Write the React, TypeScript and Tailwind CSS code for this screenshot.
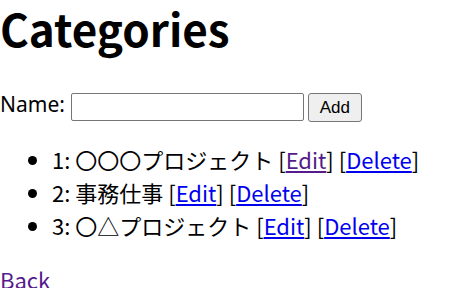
export default function App() {
  const jp = { fontFamily: '"Noto Sans CJK JP", "Noto Sans", sans-serif' };
  return (
    <div className="bg-white text-black text-[22px] leading-normal w-[454px] h-[288px] overflow-hidden" style={jp}>
      <h1 className="text-[44px] font-bold leading-[44px] mt-[6px] mb-[40px]">Categories</h1>
      <div className="flex items-start h-[31px]">
        <span className="text-[21px] leading-[28px]" style={{ fontFamily: '"Noto Sans", sans-serif' }}>Name:</span>
        <input
          type="text"
          className="ml-[6px] mt-[3px] w-[233px] h-[28px] border border-[#767676] rounded-[2px] bg-white px-1 outline-none"
        />
        <button
          className="ml-[4px] mt-[3px] w-[54px] h-[29px] border border-[#767676] rounded-[3px] bg-[#efefef] text-[17px] leading-none text-black"
          style={{ fontFamily: '"Liberation Sans", Arial, sans-serif' }}
        >
          Add
        </button>
      </div>
      <ul className="list-disc pl-[52px] mt-[22px] mb-[21px]">
        <li>
          1: 〇〇〇プロジェクト [<a className="text-[#551a8b] underline" href="#">Edit</a>] [
          <a className="text-[#0000ee] underline" href="#">Delete</a>]
        </li>
        <li>
          2: 事務仕事 [<a className="text-[#0000ee] underline" href="#">Edit</a>] [
          <a className="text-[#0000ee] underline" href="#">Delete</a>]
        </li>
        <li>
          3: 〇△プロジェクト [<a className="text-[#0000ee] underline" href="#">Edit</a>] [
          <a className="text-[#0000ee] underline" href="#">Delete</a>]
        </li>
      </ul>
      <a className="text-[#551a8b] underline" href="#">Back</a>
    </div>
  );
}
